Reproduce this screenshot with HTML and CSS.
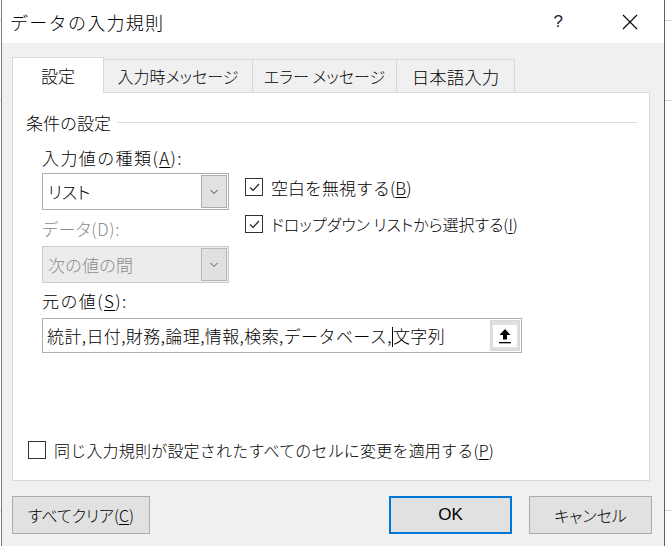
FILE: index.html
```html
<!DOCTYPE html>
<html lang="ja">
<head>
<meta charset="utf-8">
<title>データの入力規則</title>
<link rel="stylesheet" href="styles.css">
</head>
<body>
<div class="dialog">
  <div class="titlebar">
    <span class="title">データの入力規則</span>
    <span class="help">?</span>
    <span class="close">
      <svg width="16" height="16" viewBox="0 0 16 16"><path d="M1 1 L15 15 M15 1 L1 15" stroke="#000" stroke-width="1.1" fill="none"/></svg>
    </span>
  </div>
  <div class="body">
    <div class="tabs">
      <div class="tab active t1">設定</div>
      <div class="tab t2">入力時メッセージ</div>
      <div class="tab t3">エラー メッセージ</div>
      <div class="tab t4">日本語入力</div>
    </div>
    <div class="panel">
      <div class="group-head"><span>条件の設定</span><span class="rule"></span></div>
      <div class="criteria">
        <div class="left">
          <div class="label spaced">入力値の種類(<u>A</u>):</div>
          <div class="combo">
            <span class="value kana">リスト</span>
            <span class="drop"><svg width="10" height="6" viewBox="0 0 10 6"><path d="M1.5 1 L5 4.5 L8.5 1" stroke="#444" stroke-width="1" fill="none"/></svg></span>
          </div>
          <div class="label disabled kana">データ(D):</div>
          <div class="combo dis">
            <span class="value">次の値の間</span>
            <span class="drop"><svg width="10" height="6" viewBox="0 0 10 6"><path d="M1.5 1 L5 4.5 L8.5 1" stroke="#555" stroke-width="1" fill="none"/></svg></span>
          </div>
        </div>
        <div class="right">
          <div class="check-row wide">
            <span class="box"><svg width="15" height="15" viewBox="0 0 15 15"><path d="M3 7.5 L6 10.5 L12 4" stroke="#222" stroke-width="1.2" fill="none"/></svg></span>
            <span>空白を無視する(<u>B</u>)</span>
          </div>
          <div class="check-row kana">
            <span class="box"><svg width="15" height="15" viewBox="0 0 15 15"><path d="M3 7.5 L6 10.5 L12 4" stroke="#222" stroke-width="1.2" fill="none"/></svg></span>
            <span>ドロップダウン リストから選択する(<u>I</u>)</span>
          </div>
        </div>
      </div>
      <div class="label src spaced">元の値(<u>S</u>):</div>
      <div class="source">
        <span class="value">統計,日付,財務,論理,情報,検索,データベース,<span class="caret"></span>文字列</span>
        <span class="collapse"><svg width="14" height="16" viewBox="0 0 14 16"><path d="M7 1 L12.5 7 L9 7 L9 11.5 L5 11.5 L5 7 L1.5 7 Z" fill="#000"/><rect x="1" y="14" width="12" height="1.3" fill="#000"/></svg></span>
      </div>
      <div class="check-row apply">
        <span class="box"></span>
        <span>同じ入力規則が設定されたすべてのセルに変更を適用する(<u>P</u>)</span>
      </div>
    </div>
    <div class="buttons">
      <div class="btn clear kana">すべてクリア(<u>C</u>)</div>
      <div class="spacer"></div>
      <div class="btn ok">OK</div>
      <div class="btn cancel kana">キャンセル</div>
    </div>
  </div>
</div>
</body>
</html>
```

FILE: styles.css
```css
html, body {
  margin: 0;
  padding: 0;
}
body {
  width: 671px;
  height: 546px;
  overflow: hidden;
  background:
    linear-gradient(#d4d4d4, #d4d4d4) 0 20px / 100% 1px no-repeat,
    linear-gradient(#d4d4d4, #d4d4d4) 0 100px / 100% 1px no-repeat,
    linear-gradient(#d4d4d4, #d4d4d4) 0 510px / 100% 1px no-repeat,
    #ffffff;
  font-family: "Noto Sans CJK JP", "Noto Sans", sans-serif;
  font-weight: 300;
  font-size: 16px;
  color: #000;
}
.kana { font-feature-settings: "palt"; }
u { text-decoration: underline; text-underline-offset: 2px; text-decoration-thickness: 1px; }

.dialog {
  margin-left: 1px;
  width: 662px;
  height: 546px;
  border-left: 1px solid #7a7a7a;
  border-right: 1px solid #5e5e5e;
  background: #f0f0f0;
  display: flex;
  flex-direction: column;
}

.titlebar {
  height: 43px;
  background: #fff;
  display: flex;
  align-items: center;
  padding-left: 8px;
  flex: none;
}
.title { font-size: 18px; letter-spacing: 1.3px; }
.help {
  margin-left: auto;
  font-family: "Liberation Sans", sans-serif;
  font-size: 17px;
  color: #222;
  margin-right: 59px;
}
.close {
  display: flex;
  margin-right: 26px;
}

.body {
  padding: 14px 0 0 10px;
}

.tabs {
  display: flex;
  align-items: flex-end;
  height: 35px;
  font-feature-settings: "palt";
}
.tab {
  box-sizing: border-box;
  height: 33px;
  border: 1px solid #d9d9d9;
  border-bottom: none;
  border-left: none;
  display: flex;
  align-items: center;
  justify-content: center;
  font-size: 16px;
  background: #f0f0f0;
}
.tab.active {
  height: 36px;
  margin-bottom: -1px;
  background: #fff;
  border-left: 1px solid #d9d9d9;
  position: relative;
  z-index: 1;
  font-size: 17px;
}
.t1 { width: 92px; }
.t2 { width: 149px; }
.t3 { width: 144px; }
.t4 { width: 118px; font-size: 17.5px; }

.panel {
  box-sizing: border-box;
  width: 638px;
  height: 389px;
  background: #fff;
  border: 1px solid #d9d9d9;
  padding: 19px 12px 0 13px;
  display: flex;
  flex-direction: column;
}

.group-head {
  display: flex;
  align-items: center;
  height: 20px;
  font-size: 17px;
}
.group-head .rule {
  flex: 1;
  height: 1px;
  background: #dcdcdc;
  margin-left: 6px;
}

.criteria {
  display: flex;
  margin-top: 16px;
}
.left {
  margin-left: 16px;
  width: 187px;
}
.label {
  height: 20px;
  line-height: 20px;
  font-size: 17px;
  white-space: nowrap;
}
.label.spaced { letter-spacing: 1.4px; }
.label.disabled { color: #8c8c8c; margin-top: 9px; letter-spacing: 0.6px; }
.label.src { margin-left: 16px; margin-top: 8px; }

.combo {
  box-sizing: border-box;
  margin-top: 5px;
  height: 37px;
  border: 1px solid #adadad;
  background: #fff;
  display: flex;
  align-items: center;
  padding: 1px;
}
.combo .value {
  flex: 1;
  padding-left: 4px;
  font-size: 17px;
}
.combo .drop {
  box-sizing: border-box;
  width: 26px;
  height: 33px;
  background: #e1e1e1;
  border: 1px solid #adadad;
  display: flex;
  align-items: center;
  justify-content: center;
}
.combo.dis {
  background: #ececec;
  border-color: #cccccc;
  margin-top: 7px;
}
.combo.dis .value { color: #8c8c8c; }
.combo.dis .drop { border-color: #b8b8b8; background: #e0e0e0; }

.right {
  margin-left: 16px;
  padding-top: 29px;
}
.check-row {
  display: flex;
  align-items: center;
  height: 20px;
  font-size: 16px;
  white-space: nowrap;
}
.check-row.wide { font-size: 17px; }
.right .check-row + .check-row { margin-top: 17px; }
.box {
  box-sizing: border-box;
  width: 18px;
  height: 18px;
  border: 1px solid #333;
  background: #fff;
  margin-right: 8px;
  display: flex;
  align-items: center;
  justify-content: center;
  flex: none;
}

.source {
  box-sizing: border-box;
  margin-top: 7px;
  margin-left: 16px;
  width: 480px;
  height: 35px;
  border: 1px solid #adadad;
  display: flex;
  align-items: center;
  padding: 1px;
}
.source .value {
  flex: 1;
  padding-left: 3px;
  font-size: 17px;
  white-space: nowrap;
  letter-spacing: 0.4px;
}
.caret {
  display: inline-block;
  width: 1px;
  height: 20px;
  background: #000;
  vertical-align: -4px;
}
.collapse {
  box-sizing: border-box;
  width: 30px;
  height: 31px;
  background: #e1e1e1;
  border: 2px solid #dadada;
  display: flex;
  align-items: center;
  justify-content: center;
  background-clip: padding-box;
}
.collapse svg { background: #fff; padding: 3px 5px; }

.check-row.apply {
  margin-top: auto;
  margin-bottom: 20px;
  margin-left: 2px;
  font-size: 16px;
  letter-spacing: 0.2px;
}

.buttons {
  display: flex;
  margin-top: 15px;
  width: 640px;
}
.spacer { flex: 1; }
.btn {
  box-sizing: border-box;
  height: 38px;
  border: 1px solid #adadad;
  background: #e1e1e1;
  display: flex;
  align-items: center;
  justify-content: center;
  font-size: 16px;
}
.btn.clear { width: 138px; }
.btn.ok {
  width: 123px;
  border: 2px solid #0078d7;
  font-family: "Liberation Sans", sans-serif;
  font-size: 17px;
}
.btn.cancel { width: 123px; margin-left: 17px; }
```
